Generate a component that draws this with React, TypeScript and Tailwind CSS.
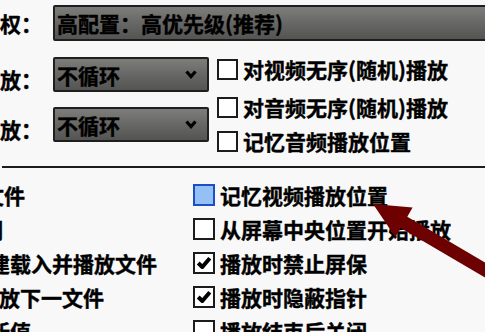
import React from "react";

const font = { fontFamily: '"Noto Sans CJK SC", "Noto Sans", sans-serif' };

const txt = "whitespace-nowrap text-[21px] font-bold leading-[24px] text-black [-webkit-text-stroke:0.4px_black]";

function Box({ checked = false, focus = false, big = false }: { checked?: boolean; focus?: boolean; big?: boolean }) {
  return (
    <span
      className={`flex shrink-0 items-center justify-center border-2 ${big ? "h-[22px] w-[22px]" : "h-[21px] w-[21px]"} ${
        focus ? "border-[#1d4fc4] bg-[#94c0f6]" : "border-[#1c1c1c] bg-white"
      }`}
    >
      {checked && (
        <svg viewBox="0 0 16 16" className="h-[16px] w-[16px]">
          <path d="M2.2 8 L6.3 12 L13.8 3.2" fill="none" stroke="#000" strokeWidth="4" strokeLinejoin="round" />
        </svg>
      )}
    </span>
  );
}

function Select({ text, className }: { text: string; className: string }) {
  return (
    <div
      className={`flex items-center rounded-[2px] border-2 border-[#1f1f1f] bg-gradient-to-b from-[#7d7d7a] via-[#676765] to-[#545452] pl-[2px] pr-[10px] ${className}`}
    >
      <span className={`flex-1 ${txt}`}>{text}</span>
      <svg viewBox="0 0 12 9" className="h-[9px] w-[12px] shrink-0">
        <path d="M1.5 1.5 L6 6.5 L10.5 1.5" fill="none" stroke="#000" strokeWidth="3.2" />
      </svg>
    </div>
  );
}

function Check({ label, checked, focus, big }: { label: string; checked?: boolean; focus?: boolean; big?: boolean }) {
  return (
    <div className="flex items-center gap-[5px]">
      <Box checked={checked} focus={focus} big={big} />
      <span className={txt}>{label}</span>
    </div>
  );
}

const leftLines = [
  { text: "文件", ml: "-ml-[17px]" },
  { text: "时间", ml: "-ml-[39px]" },
  { text: "建载入并播放文件", ml: "-ml-[11px]" },
  { text: "放下一文件", ml: "-ml-[1px]" },
  { text: "新值", ml: "-ml-[11px]" },
];

const rightChecks = [
  { label: "记忆视频播放位置", focus: true },
  { label: "从屏幕中央位置开始播放" },
  { label: "播放时禁止屏保", checked: true },
  { label: "播放时隐蔽指针", checked: true },
  { label: "播放结束后关闭" },
];

export default function App() {
  return (
    <div className="relative h-[332px] w-[485px] overflow-hidden bg-[#f8f8f8] text-black" style={font}>
      <div className="pt-[5px]">
        <div className="flex items-center">
          <span className={`w-[53px] shrink-0 ${txt}`}>权：</span>
          <div className="min-w-0 flex-1 overflow-hidden">
            <Select text="高配置：高优先级(推荐)" className="h-[36px] w-[460px]" />
          </div>
        </div>

        <div className="mt-[16px] flex">
          <div className="flex w-[217px] shrink-0 flex-col gap-[15px]">
            <div className="flex items-center">
              <span className={`w-[53px] shrink-0 pt-[8px] ${txt}`}>放：</span>
              <Select text="不循环" className="h-[35px] w-[156px]" />
            </div>
            <div className="flex items-center">
              <span className={`w-[53px] shrink-0 pt-[8px] ${txt}`}>放：</span>
              <Select text="不循环" className="h-[35px] w-[156px]" />
            </div>
          </div>
          <div className="flex flex-col">
            <Check label="对视频无序(随机)播放" />
            <div className="mt-[14px]">
              <Check label="对音频无序(随机)播放" />
            </div>
            <div className="mt-[10px]">
              <Check label="记忆音频播放位置" />
            </div>
          </div>
        </div>
      </div>

      <div className="ml-[2px] mt-[13px] h-[2px] bg-[#1c1c1c]" />

      <div className="mt-[10px] flex">
        <div className="flex w-[193px] shrink-0 flex-col overflow-hidden">
          {leftLines.map((l) => (
            <div key={l.text} className="flex h-[34px] items-center">
              <span className={`${txt} ${l.ml}`}>{l.text}</span>
            </div>
          ))}
        </div>
        <div className="flex flex-col">
          {rightChecks.map((c) => (
            <div key={c.label} className="flex h-[34px] items-center">
              <Check label={c.label} checked={c.checked} focus={c.focus} big />
            </div>
          ))}
        </div>
      </div>

      <svg className="pointer-events-none absolute left-0 top-0" width="485" height="332" viewBox="0 0 485 332">
        <polygon
          points="373,204 412.6,207.6 407.3,216.7 510.7,277.5 504.1,288.7 400.7,227.9 395.4,237"
          fill="#6d0000"
        />
      </svg>
    </div>
  );
}
